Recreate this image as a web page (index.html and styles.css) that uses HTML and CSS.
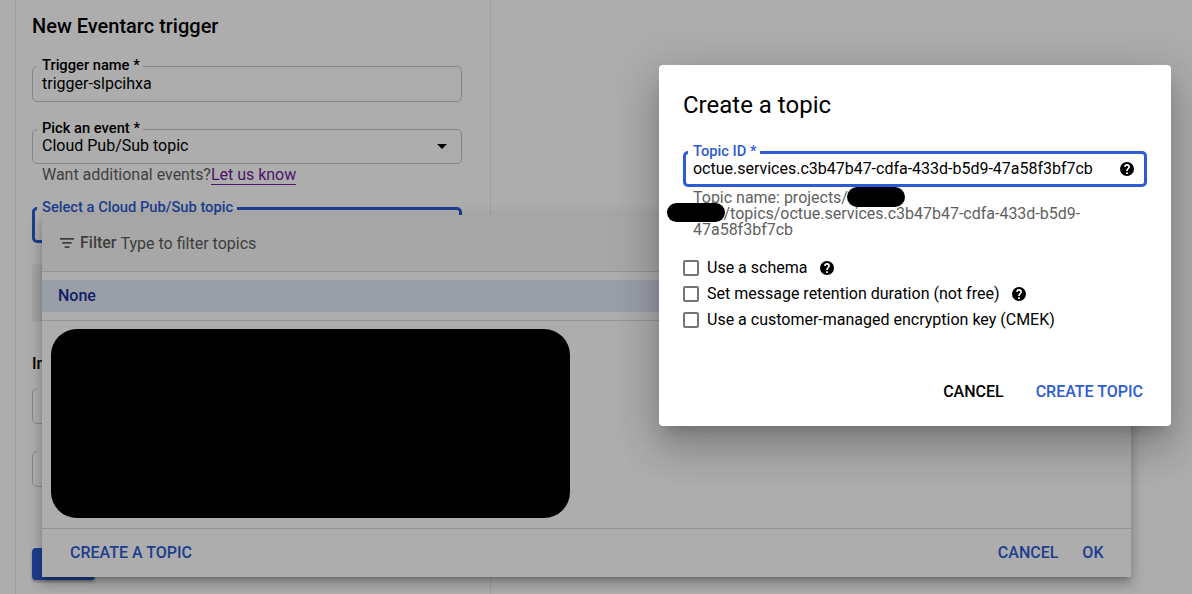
FILE: index.html
```html
<!DOCTYPE html>
<html lang="en">
<head>
<meta charset="utf-8">
<title>New Eventarc trigger</title>
<link rel="stylesheet" href="styles.css">
</head>
<body>
<svg class="defs" width="0" height="0">
  <symbol id="help" viewBox="0 0 20 20"><path fill-rule="evenodd" d="M10 0a10 10 0 1 0 0 20a10 10 0 0 0 0-20zM11.2 17.2H8.8v-2.4h2.4zM13.2 9.4l-.9.92C11.6 11 11.2 11.6 11.2 13H8.8v-.5c0-1.1.45-2.1 1.17-2.83l1.24-1.26A1.75 1.75 0 1 0 8.2 7H5.9a4.1 4.1 0 1 1 8.2 0c0 .9-.36 1.8-.9 2.4z"/></symbol>
</svg>
<main class="panel">
  <h1 class="panel-title">New Eventarc trigger</h1>
  <fieldset class="field field-name"><legend><span>Trigger name *</span></legend><div class="row"><span>trigger-slpcihxa</span></div></fieldset>
  <fieldset class="field field-event"><legend><span>Pick an event *</span></legend><div class="row"><span>Cloud Pub/Sub topic</span>
    <svg width="10" height="5" viewBox="0 0 10 5"><path d="M0 0h10L5 5z"/></svg></div>
  </fieldset>
  <p class="hint"><span>Want additional events?</span><a class="link" href="#">Let us know</a></p>
  <fieldset class="field field-topic focused"><legend><span>Select a Cloud Pub/Sub topic</span></legend></fieldset>
  <div class="notice"></div>
  <h2 class="section">In</h2>
  <fieldset class="field field-empty"><legend class="blank"></legend></fieldset>
  <fieldset class="field field-empty"><legend class="blank"></legend></fieldset>
  <div class="submit"></div>
</main>

<section class="popup">
  <div class="filter">
    <svg width="14" height="10" viewBox="0 0 14 10"><path d="M0 0h14v1.7H0zM2.3 4.1h9.4v1.7H2.3zM4.6 8.2h4.8v1.7H4.6z"/></svg>
    <b class="filter-label">Filter</b><span class="filter-text">Type to filter topics</span>
  </div>
  <div class="option-group"><div class="option"><span>None</span></div></div>
  <div class="list"></div>
  <div class="popup-actions"><span>CREATE A TOPIC</span><span class="a-cancel">CANCEL</span><span class="a-ok">OK</span></div>
</section>
<div class="scrim"></div>
<div class="redacted-list"></div>

<section class="dialog">
  <h2 class="dialog-title"><span>Create a topic</span></h2>
  <fieldset class="field focused field-id"><legend><span>Topic ID *</span></legend><div class="row"><span>octue.services.c3b47b47-cdfa-433d-b5d9-47a58f3bf7cb</span>
    <svg class="help" width="14" height="14"><use href="#help"/></svg></div>
  </fieldset>
  <div class="topic-name">
    <div class="line"><span class="l1">Topic name: projects/</span><i class="redact"></i></div>
    <div class="line line-two"><i class="redact"></i><span class="l2">/topics/octue.services.c3b47b47-cdfa-433d-b5d9-</span></div>
    <div class="line"><span>47a58f3bf7cb</span></div>
  </div>
  <div class="checks">
    <div class="check"><i class="box"></i><span>Use a schema</span><svg class="help" width="14" height="14"><use href="#help"/></svg></div>
    <div class="check"><i class="box"></i><span>Set message retention duration (not free)</span><svg class="help" width="14" height="14"><use href="#help"/></svg></div>
    <div class="check"><i class="box"></i><span>Use a customer-managed encryption key (CMEK)</span></div>
  </div>
  <div class="dialog-actions"><span>CANCEL</span><span class="d-create">CREATE TOPIC</span></div>
</section>
</body>
</html>
```
FILE: styles.css
```css
* { box-sizing: border-box; }
body { margin: 0; height: 594px; overflow: hidden; position: relative; background: #fff; color: #000; font: 16px/20px Roboto, sans-serif; white-space: nowrap; }
h1, h2, p { margin: 0; }
svg { display: block; flex: none; }
.defs { position: absolute; }

.panel { width: 476px; height: 594px; margin-left: 15px; padding: 14px 28px 0 16px; border: solid #ececec; border-width: 0 1px; display: flex; flex-direction: column; }
.panel-title { font-size: 20px; line-height: 24px; font-weight: 500; }
.field { flex: none; min-width: 0; width: 430px; height: 36px; margin: 0; padding: 0 14px 0 9px; border: 1px solid #c8c8c8; border-radius: 5px; }
.field legend { display: flex; align-items: flex-end; height: 1px; margin-left: -5px; padding: 0 3.5px 0 5px; font-size: 14.7px; font-weight: 500; line-height: 20px; }
.field legend span { margin-bottom: -8px; }
.field .blank { width: 60px; }
.row { display: flex; align-items: center; justify-content: space-between; height: 20px; margin-top: 7px; }
.field-name { margin-top: 28px; }
.field-event { height: 35px; margin-top: 27px; }
.field-event .row { margin-top: 6px; }
.hint { display: flex; height: 20px; margin: 1px 0 0 10px; color: #5f5f5f; letter-spacing: -.02px; }
.link { color: #701ca0; text-decoration: none; border-bottom: 1px solid; height: 20px; }
.field.focused { border: 3px solid #2d5bd3; padding: 0 10px 0 7px; }
.field.focused legend { margin-left: -5px; padding: 0 4px 0 5px; height: 3px; color: #2d5bd3; }
.field.focused legend span { margin-bottom: -7px; }
.focused .row { margin-top: 5px; }
.field-topic { margin-top: 22px; }
.notice { width: 430px; height: 58px; margin-top: 21px; border-radius: 4px; background: #f1f1f1; flex: none; }
.section { font-size: 16px; line-height: 20px; font-weight: 500; margin-top: 32px; }
.field-empty { margin-top: 14px; }
.field-empty + .field-empty { margin-top: 27px; }
.submit { width: 63px; height: 32px; margin-top: 61px; border-radius: 4px; background: #2d5bd3; box-shadow: 0 2px 3px rgba(0,0,0,.3); flex: none; }

.popup { position: absolute; left: 42px; top: 215px; width: 1089px; height: 362px; display: flex; flex-direction: column; background: #fff; box-shadow: 0 5px 5px -3px rgba(0,0,0,.2), 0 8px 10px 1px rgba(0,0,0,.14), 0 3px 14px 2px rgba(0,0,0,.12); }
.filter { display: flex; align-items: center; height: 57px; padding-left: 18px; background: #f7f7f7; border-bottom: 1px solid #dadada; color: #5c5c5c; fill: #5c5c5c; }
.filter-label { margin-left: 6px; font-weight: 500; }
.filter-text { margin: 2px 0 0 4px; }
.option-group { height: 49px; padding-top: 8px; border-bottom: 1px solid #dadada; }
.option { display: flex; align-items: center; height: 32px; padding-left: 16px; background: #e4e9f8; color: #182f98; font-weight: 500; }
.list { flex: 1; }
.popup-actions { display: flex; align-items: center; height: 49px; padding: 0 27.5px 0 28px; border-top: 1px solid #dadada; color: #2d5bd3; font-weight: 500; }
.a-cancel { margin-left: auto; }
.a-ok { margin-left: 24px; }
.scrim { position: absolute; inset: 0; background: rgba(0,0,0,.32); }
.redacted-list { position: absolute; left: 51px; top: 329px; width: 519px; height: 189px; border-radius: 26px; background: #000; }

.dialog { position: absolute; left: 659px; top: 65px; width: 512px; height: 361px; padding: 24px 24px 0; border-radius: 4px; background: #fff; box-shadow: 0 11px 15px -7px rgba(0,0,0,.2), 0 24px 38px 3px rgba(0,0,0,.14), 0 9px 46px 8px rgba(0,0,0,.12); }
.dialog-title { font-size: 24px; font-weight: 400; line-height: 32px; }
.field-id { width: 464px; margin-top: 30px; letter-spacing: -.01px; }
.help { fill: #000; }
.topic-name { padding: 3px 0 0 10px; color: #5f5f5f; }
.line { display: flex; height: 16px; line-height: 16px; letter-spacing: -.01px; }
.redact { width: 58px; height: 20px; border-radius: 10px; background: #000; margin: -3px 0 0 -1px; }
.line-two { margin-left: -26px; }
.line-two .redact { height: 19px; margin-left: 0; }
.l2 { margin-left: -1.5px; }
.checks { display: flex; flex-direction: column; gap: 6px; margin-top: 20px; }
.check { display: flex; align-items: center; height: 20px; }
.box { width: 16px; height: 16px; margin-right: 8px; border: 2px solid #757575; border-radius: 2px; }
.check .help { margin-left: 13px; }
.dialog-actions { display: flex; justify-content: flex-end; gap: 32px; margin-top: 52px; padding-right: 4px; font-weight: 500; }
.d-create { color: #2d5bd3; }
```
